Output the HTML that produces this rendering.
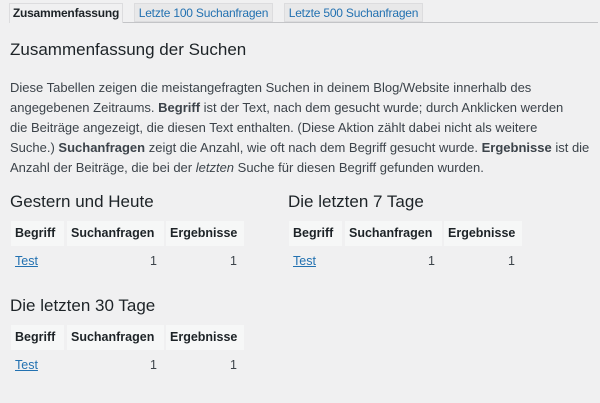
<!DOCTYPE html>
<html><head><meta charset="utf-8"><style>
body{margin:0;width:600px;height:403px;background:#f0f0f1;font-family:"Liberation Sans",sans-serif;color:#3c434a;position:relative;overflow:hidden}
.a{position:absolute;white-space:nowrap}
.tab{position:absolute;top:3px;height:19px;border:1px solid #dcdcde;background:#e8e8e9;font-size:12px;letter-spacing:-0.2px;line-height:18px;text-align:center;color:#2271b1;box-sizing:border-box;white-space:nowrap;overflow:hidden}
.line{position:absolute;left:9px;right:2px;top:22px;height:1px;background:#c3c4c7}
h{position:absolute;font-size:17px;color:#1d2327;white-space:nowrap}
p{margin:0;position:absolute;left:10px;top:78px;font-size:13px;line-height:20px}
.th{position:absolute;height:25px;background:#f6f7f7;font-weight:bold;font-size:12.5px;line-height:25px;color:#1d2327;box-sizing:border-box;padding-left:4px;white-space:nowrap}
.l{position:absolute;font-size:12.5px;color:#2271b1;text-decoration:underline}
.n{position:absolute;font-size:12.5px}
</style></head><body>
<div class="line"></div>
<div class="tab" style="left:9px;width:114px;height:20px;background:#f0f0f1;color:#1d2327;font-weight:bold;border-bottom:none">Zusammenfassung</div>
<div class="tab" style="left:134px;width:139px">Letzte 100 Suchanfragen</div>
<div class="tab" style="left:284px;width:139px">Letzte 500 Suchanfragen</div>
<h style="left:10px;top:40px">Zusammenfassung der Suchen</h>
<p><span class="a" style="top:0">Diese Tabellen zeigen die meistangefragten Suchen in deinem Blog/Website innerhalb des</span><br>
<span class="a" style="top:20px">angegebenen Zeitraums. <b>Begriff</b> ist der Text, nach dem gesucht wurde; durch Anklicken werden</span><br>
<span class="a" style="top:40px">die Beiträge angezeigt, die diesen Text enthalten. (Diese Aktion zählt dabei nicht als weitere</span><br>
<span class="a" style="top:60px">Suche.) <b>Suchanfragen</b> zeigt die Anzahl, wie oft nach dem Begriff gesucht wurde. <b>Ergebnisse</b> ist die</span><br>
<span class="a" style="top:80px">Anzahl der Beiträge, die bei der <i>letzten</i> Suche für diesen Begriff gefunden wurden.</span></p>

<h style="left:10px;top:192px">Gestern und Heute</h>
<div class="th" style="left:11px;top:221px;width:53px">Begriff</div>
<div class="th" style="left:67px;top:221px;width:97px">Suchanfragen</div>
<div class="th" style="left:166px;top:221px;width:78px">Ergebnisse</div>
<div class="l" style="left:15px;top:254px">Test</div>
<div class="n" style="left:150px;top:254px">1</div>
<div class="n" style="left:230px;top:254px">1</div>

<h style="left:288px;top:192px">Die letzten 7 Tage</h>
<div class="th" style="left:289px;top:221px;width:53px">Begriff</div>
<div class="th" style="left:345px;top:221px;width:97px">Suchanfragen</div>
<div class="th" style="left:444px;top:221px;width:78px">Ergebnisse</div>
<div class="l" style="left:293px;top:254px">Test</div>
<div class="n" style="left:428px;top:254px">1</div>
<div class="n" style="left:508px;top:254px">1</div>

<h style="left:10px;top:296px">Die letzten 30 Tage</h>
<div class="th" style="left:11px;top:325px;width:53px">Begriff</div>
<div class="th" style="left:67px;top:325px;width:97px">Suchanfragen</div>
<div class="th" style="left:166px;top:325px;width:78px">Ergebnisse</div>
<div class="l" style="left:15px;top:358px">Test</div>
<div class="n" style="left:150px;top:358px">1</div>
<div class="n" style="left:230px;top:358px">1</div>
</body></html>
